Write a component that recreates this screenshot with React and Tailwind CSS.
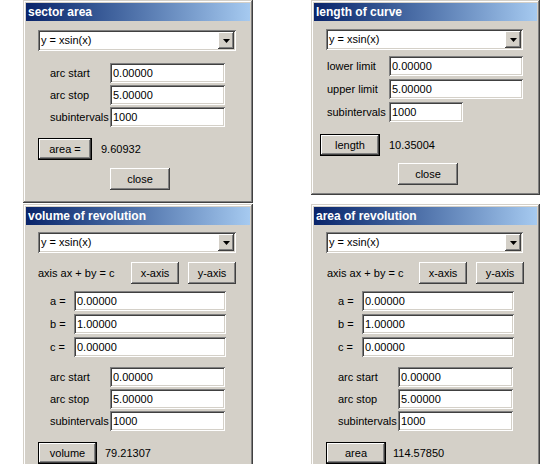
import React from "react";

const RAISED =
  "shadow-[inset_-1px_-1px_#404040,inset_1px_1px_#ffffff,inset_-2px_-2px_#808080,inset_2px_2px_#d4d0c8]";
const SUNKEN =
  "shadow-[inset_1px_1px_#808080,inset_-1px_-1px_#ffffff,inset_2px_2px_#404040,inset_-2px_-2px_#d4d0c8]";

const Win = ({ title, className, children }) => (
  <div
    className={`absolute bg-[#d4d0c8] p-[3px] shadow-[inset_-1px_-1px_#404040,inset_1px_1px_#d4d0c8,inset_-2px_-2px_#808080,inset_2px_2px_#ffffff] ${className}`}
  >
    <div className="h-[18px] bg-linear-to-r from-[#0a246a] to-[#a6caf0] pl-[2px] text-[12px] font-bold leading-[18px] text-white">
      {title}
    </div>
    {children}
  </div>
);

const Combo = ({ className }) => (
  <div className={`flex h-[21px] items-center bg-white ${SUNKEN} ${className}`}>
    <span className="flex-1 pl-[3px] text-[11px]">y = xsin(x)</span>
    <div className={`mr-[2px] flex h-[17px] w-[16px] items-center justify-center bg-[#d4d0c8] ${RAISED}`}>
      <svg width="7" height="4" viewBox="0 0 7 4">
        <path d="M0 0h7L3.5 4z" fill="#000" />
      </svg>
    </div>
  </div>
);

const Field = ({ value, className }) => (
  <div className={`flex h-[20px] items-center bg-white pl-[3px] text-[11px] ${SUNKEN} ${className}`}>
    {value}
  </div>
);

const Button = ({ label, className, primary }) =>
  primary ? (
    <div className={`h-[22px] border border-black ${className}`}>
      <div className={`flex h-full items-center justify-center bg-[#d4d0c8] text-[11px] ${RAISED}`}>
        {label}
      </div>
    </div>
  ) : (
    <div className={`flex h-[22px] items-center justify-center bg-[#d4d0c8] text-[11px] ${RAISED} ${className}`}>
      {label}
    </div>
  );

const Row = ({ label, value, labelW, fieldW, className }) => (
  <div className={`flex items-center ${className}`}>
    <span className={`text-[11px] ${labelW}`}>{label}</span>
    <Field value={value} className={fieldW} />
  </div>
);

export default function App() {
  return (
    <div className="relative h-[464px] w-[559px] overflow-hidden bg-white font-['Liberation_Sans',Arial,sans-serif] text-black">
      {/* sector area */}
      <Win title="sector area" className="left-[23px] top-0 h-[203px] w-[230px]">
        <Combo className="ml-[12px] mt-[9px] w-[198px]" />
        <div className="mt-[12px] flex flex-col gap-[2px] pl-[24px]">
          <Row label="arc start" value="0.00000" labelW="w-[60px]" fieldW="w-[115px]" />
          <Row label="arc stop" value="5.00000" labelW="w-[60px]" fieldW="w-[115px]" />
          <Row label="subintervals" value="1000" labelW="w-[60px]" fieldW="w-[115px]" />
        </div>
        <div className="mt-[11px] flex items-center pl-[12px]">
          <Button primary label="area =" className="w-[54px]" />
          <span className="ml-[9px] text-[11px]">9.60932</span>
        </div>
        <Button label="close" className="ml-[84px] mt-[8px] w-[60px]" />
      </Win>

      {/* length of curve */}
      <Win title="length of curve" className="left-[311px] top-0 h-[195px] w-[229px]">
        <Combo className="ml-[12px] mt-[8px] w-[197px]" />
        <div className="mt-[6px] flex flex-col gap-[3px] pl-[13px]">
          <Row label="lower limit" value="0.00000" labelW="w-[62px]" fieldW="w-[134px]" />
          <Row label="upper limit" value="5.00000" labelW="w-[62px]" fieldW="w-[134px]" />
          <Row label="subintervals" value="1000" labelW="w-[62px]" fieldW="w-[74px]" />
        </div>
        <div className="mt-[12px] flex items-center pl-[6px]">
          <Button primary label="length" className="w-[60px]" />
          <span className="ml-[9px] text-[11px]">10.35004</span>
        </div>
        <Button label="close" className="ml-[84px] mt-[7px] w-[60px]" />
      </Win>

      {/* volume of revolution */}
      <Win title="volume of revolution" className="left-[23px] top-[204px] h-[280px] w-[230px]">
        <Combo className="ml-[12px] mt-[7px] w-[198px]" />
        <div className="mt-[9px] flex items-center pl-[12px]">
          <span className="w-[93px] text-[11px]">axis ax + by = c</span>
          <Button label="x-axis" className="w-[48px]" />
          <Button label="y-axis" className="ml-[9px] w-[48px]" />
        </div>
        <div className="mt-[7px] flex flex-col gap-[3px] pl-[24px]">
          <Row label="a =" value="0.00000" labelW="w-[24px]" fieldW="w-[152px]" />
          <Row label="b =" value="1.00000" labelW="w-[24px]" fieldW="w-[152px]" />
          <Row label="c =" value="0.00000" labelW="w-[24px]" fieldW="w-[152px]" />
        </div>
        <div className="mt-[10px] flex flex-col gap-[2px] pl-[24px]">
          <Row label="arc start" value="0.00000" labelW="w-[60px]" fieldW="w-[115px]" />
          <Row label="arc stop" value="5.00000" labelW="w-[60px]" fieldW="w-[115px]" />
          <Row label="subintervals" value="1000" labelW="w-[60px]" fieldW="w-[115px]" />
        </div>
        <div className="mt-[11px] flex items-center pl-[12px]">
          <Button primary label="volume" className="w-[59px]" />
          <span className="ml-[8px] text-[11px]">79.21307</span>
        </div>
      </Win>

      {/* area of revolution */}
      <Win title="area of revolution" className="left-[311px] top-[204px] h-[280px] w-[229px]">
        <Combo className="ml-[12px] mt-[7px] w-[197px]" />
        <div className="mt-[9px] flex items-center pl-[13px]">
          <span className="w-[92px] text-[11px]">axis ax + by = c</span>
          <Button label="x-axis" className="w-[48px]" />
          <Button label="y-axis" className="ml-[9px] w-[48px]" />
        </div>
        <div className="mt-[7px] flex flex-col gap-[3px] pl-[24px]">
          <Row label="a =" value="0.00000" labelW="w-[24px]" fieldW="w-[152px]" />
          <Row label="b =" value="1.00000" labelW="w-[24px]" fieldW="w-[152px]" />
          <Row label="c =" value="0.00000" labelW="w-[24px]" fieldW="w-[152px]" />
        </div>
        <div className="mt-[10px] flex flex-col gap-[2px] pl-[24px]">
          <Row label="arc start" value="0.00000" labelW="w-[60px]" fieldW="w-[115px]" />
          <Row label="arc stop" value="5.00000" labelW="w-[60px]" fieldW="w-[115px]" />
          <Row label="subintervals" value="1000" labelW="w-[60px]" fieldW="w-[115px]" />
        </div>
        <div className="mt-[11px] flex items-center pl-[12px]">
          <Button primary label="area" className="w-[60px]" />
          <span className="ml-[7px] text-[11px]">114.57850</span>
        </div>
      </Win>
    </div>
  );
}
